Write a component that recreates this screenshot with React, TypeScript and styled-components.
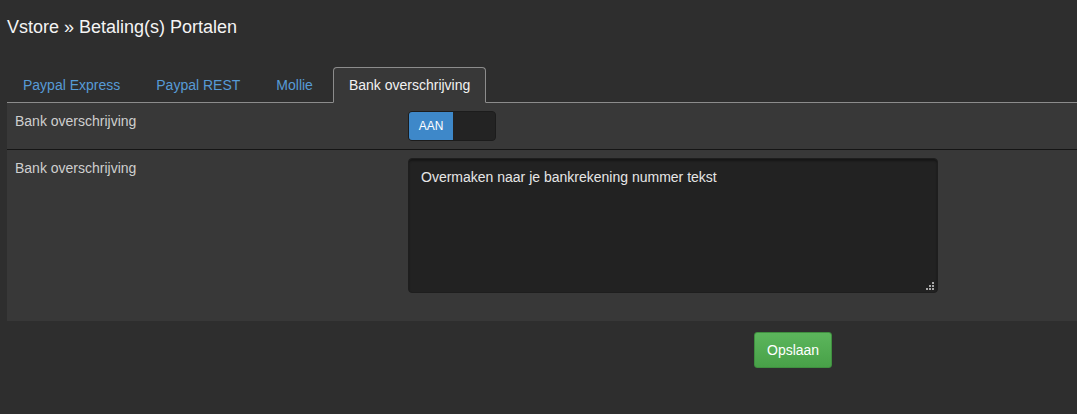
import React from "react";
import styled, { createGlobalStyle } from "styled-components";

const Global = createGlobalStyle`
  html, body { margin: 0; padding: 0; }
  body {
    background: #2e2e2e;
    font-family: "Liberation Sans", Arial, sans-serif;
    font-size: 14px;
    line-height: 20px;
    color: #d8d8d8;
  }
  * { box-sizing: border-box; }
`;

const Page = styled.div`
  width: 1077px;
  height: 414px;
  padding: 17px 0 0 7px;
`;

const Title = styled.h1`
  margin: 0;
  font-size: 18px;
  line-height: 20px;
  font-weight: normal;
  color: #f4f4f4;
`;

const TabList = styled.ul`
  list-style: none;
  margin: 30px 0 0 0;
  padding: 0;
  display: flex;
  border-bottom: 1px solid #8c8c8c;
`;

const TabItem = styled.li`
  margin-bottom: -1px;
`;

const TabLink = styled.a<{ $active?: boolean }>`
  display: block;
  margin-right: 4px;
  padding: 7px 15px;
  line-height: 20px;
  font-size: 14px;
  border: 1px solid ${(p) => (p.$active ? "#8c8c8c" : "transparent")};
  border-bottom-color: ${(p) => (p.$active ? "#383838" : "transparent")};
  border-radius: 4px 4px 0 0;
  background: ${(p) => (p.$active ? "#383838" : "transparent")};
  color: ${(p) => (p.$active ? "#f2f2f2" : "#579bd6")};
  text-decoration: none;
  cursor: pointer;
`;

const Panel = styled.div`
  background: #383838;
  padding-bottom: 20px;
`;

const Row = styled.div<{ $divider?: boolean }>`
  display: grid;
  grid-template-columns: 393px 530px;
  padding: 8px 8px;
  border-bottom: ${(p) => (p.$divider ? "1px solid #151515" : "none")};
`;

const Label = styled.label`
  line-height: 20px;
  color: #cfcfcf;
  font-size: 14px;
`;

const Switch = styled.div`
  display: flex;
  width: 88px;
  height: 30px;
  border-radius: 4px;
  overflow: hidden;
  background: #222222;
  border: 1px solid #1c1c1c;
`;

const SwitchOn = styled.span`
  width: 44px;
  display: flex;
  align-items: center;
  justify-content: center;
  background: #3e88c9;
  color: #ffffff;
  font-size: 12px;
`;

const SwitchOff = styled.span`
  flex: 1;
  background: #232323;
`;

const AreaWrap = styled.div`
  position: relative;
  width: 530px;
  height: 135px;
`;

const Area = styled.textarea`
  display: block;
  width: 100%;
  height: 100%;
  resize: none;
  background: #222222;
  border: 1px solid #1e1e1e;
  border-radius: 4px;
  box-shadow: inset 0 2px 2px rgba(0, 0, 0, 0.35);
  color: #e6e6e6;
  font-family: "Liberation Sans", Arial, sans-serif;
  font-size: 14px;
  line-height: 20px;
  padding: 8px 12px;
  outline: none;
`;

const Grip = styled.svg`
  position: absolute;
  right: 4px;
  bottom: 3px;
  width: 8px;
  height: 8px;
  pointer-events: none;
`;

const Actions = styled.div`
  padding: 11px 0 0 747px;
`;

const SaveButton = styled.button`
  height: 36px;
  padding: 0 12px;
  border: 1px solid #3f8f3f;
  border-radius: 3px;
  background: linear-gradient(#5cb65c, #48a148);
  color: #ffffff;
  font-family: "Liberation Sans", Arial, sans-serif;
  font-size: 14px;
  cursor: pointer;
`;

const tabs = ["Paypal Express", "Paypal REST", "Mollie", "Bank overschrijving"];

export default function App() {
  return (
    <>
      <Global />
      <Page>
        <Title>Vstore » Betaling(s) Portalen</Title>
        <TabList>
          {tabs.map((t, i) => (
            <TabItem key={t}>
              <TabLink $active={i === 3}>{t}</TabLink>
            </TabItem>
          ))}
        </TabList>
        <Panel>
          <Row $divider>
            <Label>Bank overschrijving</Label>
            <Switch>
              <SwitchOn>AAN</SwitchOn>
              <SwitchOff />
            </Switch>
          </Row>
          <Row>
            <Label>Bank overschrijving</Label>
            <AreaWrap>
              <Area defaultValue="Overmaken naar je bankrekening nummer tekst" />
              <Grip viewBox="0 0 8 8">
                <rect x="6" y="0" width="2" height="2" fill="#a8a8a8" />
                <rect x="3" y="3" width="2" height="2" fill="#a8a8a8" />
                <rect x="6" y="3" width="2" height="2" fill="#a8a8a8" />
                <rect x="0" y="6" width="2" height="2" fill="#a8a8a8" />
                <rect x="3" y="6" width="2" height="2" fill="#a8a8a8" />
                <rect x="6" y="6" width="2" height="2" fill="#a8a8a8" />
              </Grip>
            </AreaWrap>
          </Row>
        </Panel>
        <Actions>
          <SaveButton>Opslaan</SaveButton>
        </Actions>
      </Page>
    </>
  );
}
